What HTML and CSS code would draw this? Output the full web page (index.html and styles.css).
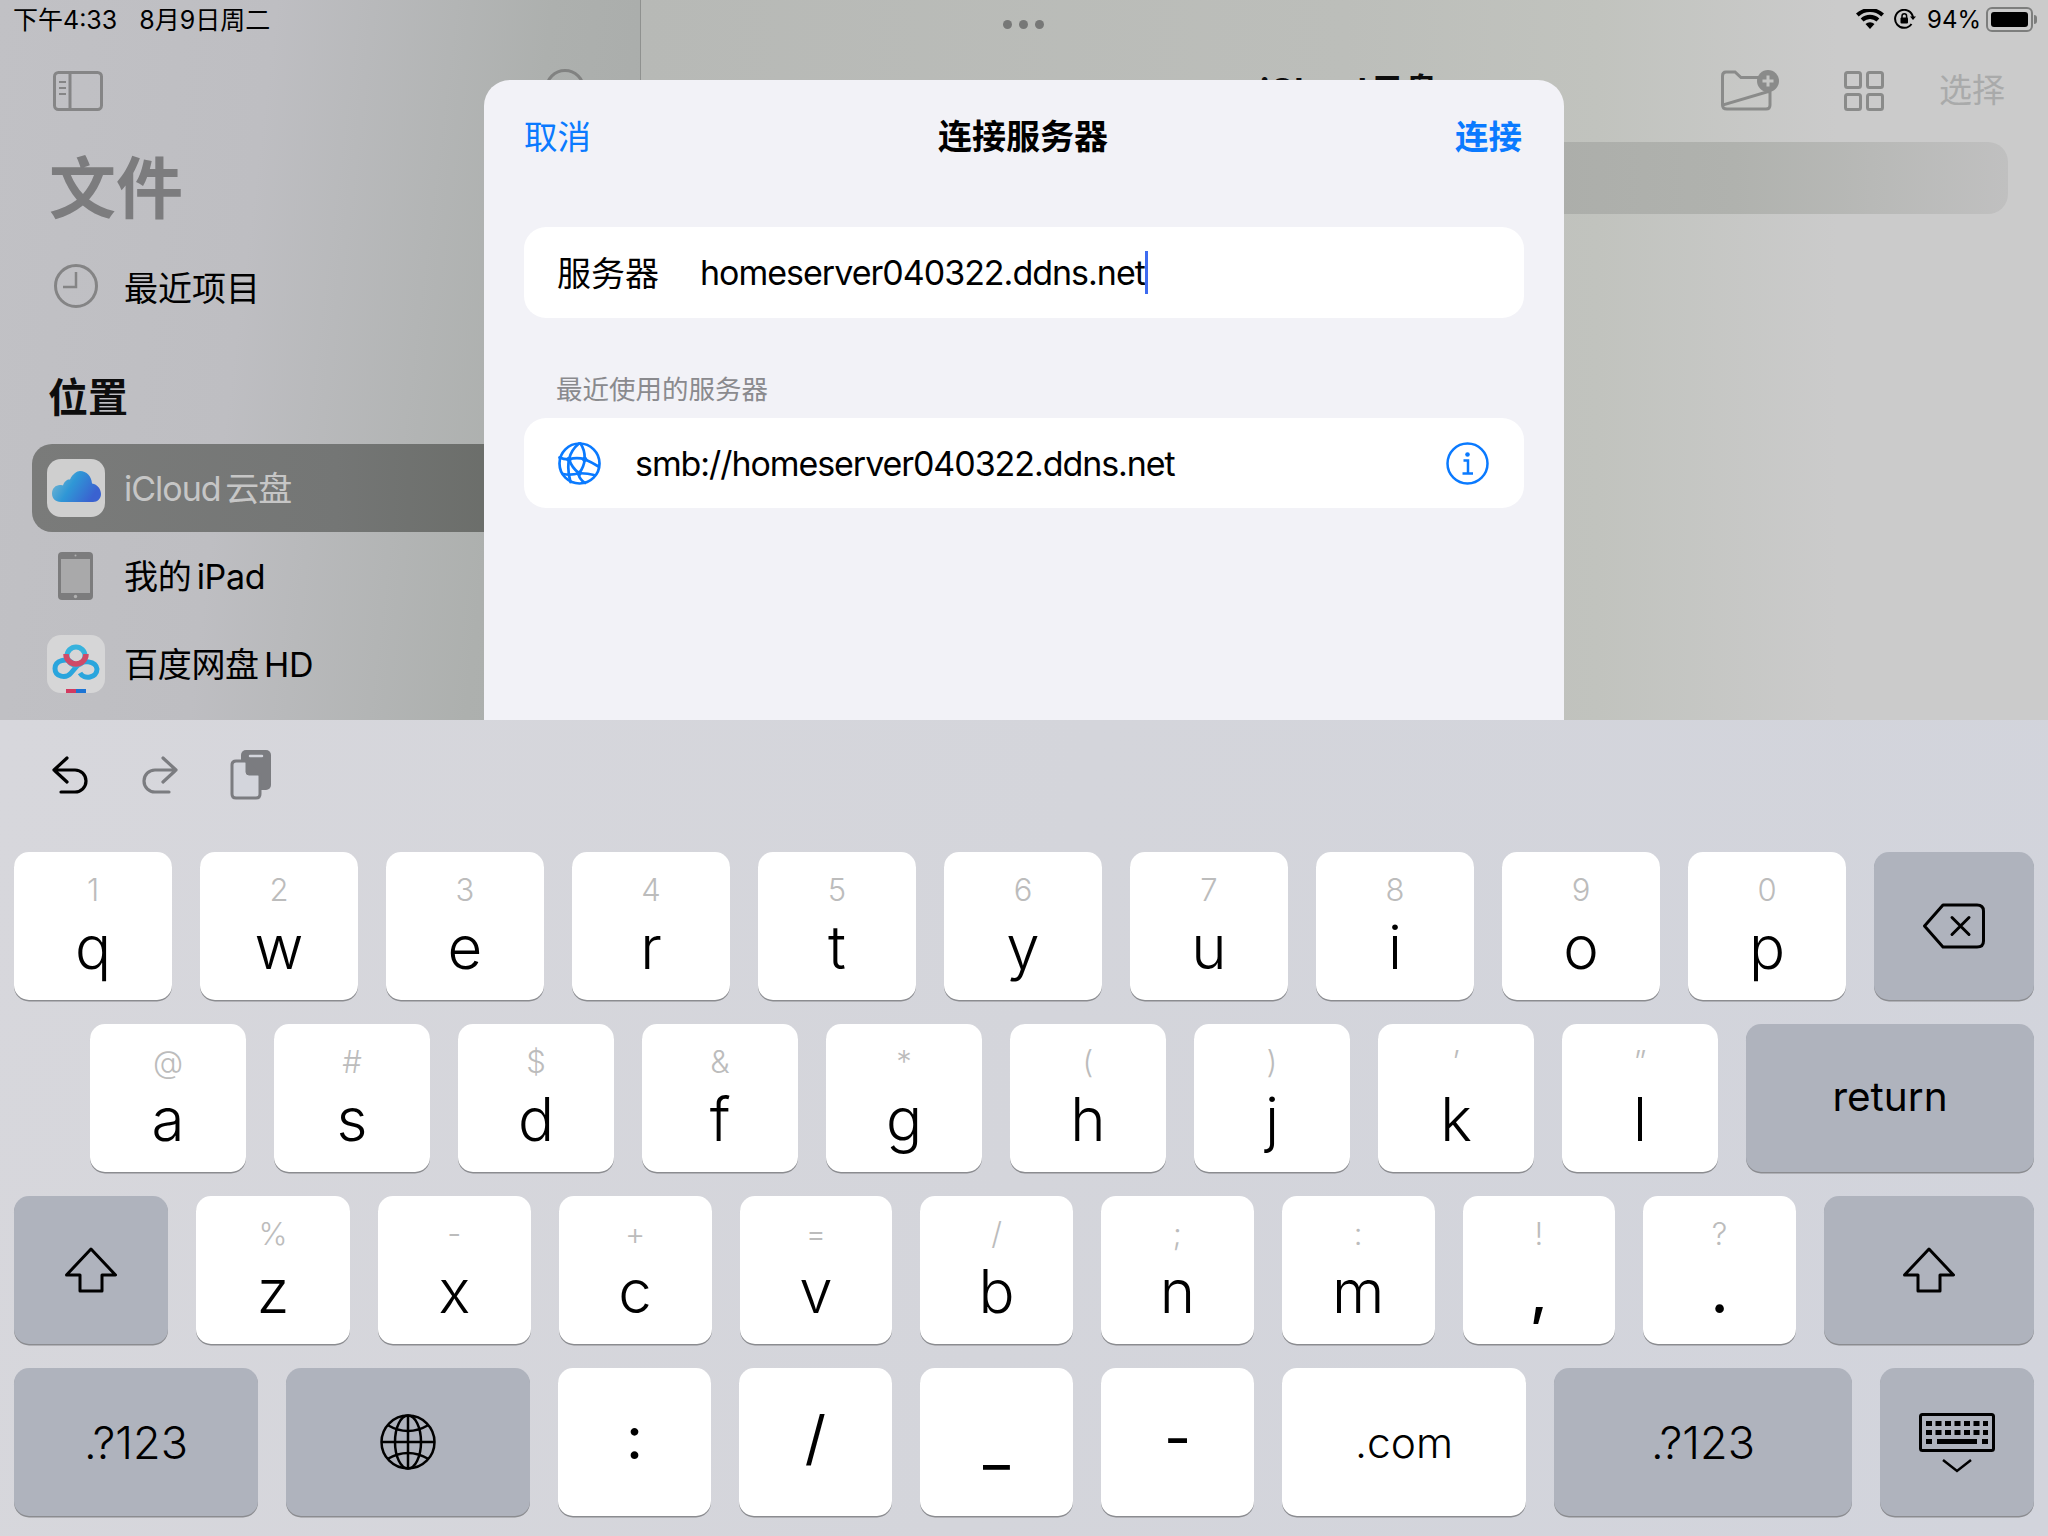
FILE: index.html
```html
<!DOCTYPE html>
<html lang="zh">
<head>
  <meta charset="UTF-8" />
  <title>连接服务器</title>
  <link rel="stylesheet" href="styles.css">
</head>
<body>

  <!-- 文件 app, dimmed behind the sheet -->
  <div class="screen">
    <div class="sidebar">
      <div class="sidebarTop">
        <svg class="sideToggle" width="50" height="40" viewBox="0 0 50 40" fill="none" stroke="#858586" stroke-width="3">
          <rect x="1.5" y="1.5" width="47" height="37" rx="4"/>
          <path d="M17 2v36"/>
          <path d="M6 11h7M6 17h7M6 23h7" stroke-width="2"/>
        </svg>
        <div class="moreCircle"></div>
      </div>
      <div class="appTitle">文件</div>
      <div class="recentRow">
        <svg class="rowIcon" width="58" height="44" viewBox="0 0 58 44" fill="none" stroke="#848485" stroke-width="3">
          <circle cx="29" cy="22" r="20.5"/>
          <path d="M29 8v15h-13" stroke-width="2.5"/>
        </svg>
        <span>最近项目</span>
      </div>
      <div class="sideHeading">位置</div>
      <div class="sideRow selected">
        <div class="appIcon cloudIcon">
          <svg class="cloudArt" width="50" height="34" viewBox="0 0 50 34">
            <defs>
              <linearGradient id="cloudFill" x1="0" y1="0" x2="1" y2="0.4">
                <stop offset="0" stop-color="#84bdd0"/>
                <stop offset="0.5" stop-color="#2f97d6"/>
                <stop offset="1" stop-color="#3a62d0"/>
              </linearGradient>
            </defs>
            <path fill="url(#cloudFill)" d="M9 31C3 31 0 27 0 22.500C0 17.500 3.500 14 8 14C9 13.800 10.500 14.200 11 14.500C12.500 9.500 16 8 18 8.500C20.500 3 25 0 28 0C34.500 0 39.500 5 40 12.500C45.500 13.500 49 18 49 23C49 27.500 45.500 31 41 31Z"/>
          </svg>
        </div>
        <span>iCloud 云盘</span>
      </div>
      <div class="sideRow">
        <svg class="padIcon" width="35" height="48" viewBox="0 0 35 48">
          <rect width="35" height="48" rx="4" fill="#7c7c7d"/>
          <rect x="3" y="7" width="29" height="34" fill="#a9a9aa"/>
          <circle cx="17.500" cy="3.500" r="1" fill="#b0b0b0"/>
          <circle cx="17.500" cy="44.500" r="1.700" fill="#b0b0b0"/>
        </svg>
        <span>我的 iPad</span>
      </div>
      <div class="sideRow">
        <div class="appIcon baiduIcon">
          <svg width="58" height="58" viewBox="0 0 58 58" fill="none">
            <path d="M25 27.500C20 23 8 25 8 33.500C8 42 19 44 24 38L30 31C35 24 49 26 50 34C50 43 37 45 33 38" stroke="#2aa5dd" stroke-width="5"/>
            <circle cx="29" cy="21" r="9" stroke="#37b2dd" stroke-width="5"/>
            <path d="M19 19A10 10 0 0 0 39 19" stroke="#cf4a68" stroke-width="5.500"/>
            <path d="M19 54h10v4h-10z" fill="#d23a60"/>
            <path d="M29 54h10v4h-10z" fill="#1c74d4"/>
          </svg>
        </div>
        <span>百度网盘 HD</span>
      </div>
    </div>

    <div class="main">
      <div class="mainTop">
        <div class="mainTitle">iCloud 云盘</div>
        <svg class="toolIcon" width="58" height="42" viewBox="0 0 58 42" fill="none" stroke="#8a8b8a" stroke-width="3">
          <path d="M1.500 36V7Q1.500 3 5 3H14L20 8.500H38M49 22V36Q49 40 45 40H6Q1.500 40 1.500 36Z"/>
          <circle cx="47" cy="12" r="11" fill="#8a8b8a" stroke="none"/>
          <path d="M47 6.500v11M41.500 12h11" stroke="#c4c5c3"/>
        </svg>
        <svg class="toolIcon gridIcon" width="40" height="40" viewBox="0 0 40 40" fill="none" stroke="#8a8b8a" stroke-width="3">
          <rect x="1.500" y="1.500" width="15" height="15" rx="2"/>
          <rect x="23.500" y="1.500" width="15" height="15" rx="2"/>
          <rect x="1.500" y="23.500" width="15" height="15" rx="2"/>
          <rect x="23.500" y="23.500" width="15" height="15" rx="2"/>
        </svg>
        <span class="selectBtn">选择</span>
      </div>
      <div class="searchBar"></div>
    </div>

    <!-- status bar -->
    <div class="statusBar">
      <span>下午4:33</span>
      <span class="statusDate">8月9日周二</span>
      <div class="statusRight">
        <svg width="28" height="20" viewBox="0 0 28 20">
          <path d="M14 20l-4.500-5a6.500 6.500 0 0 1 9 0zM7.500 12.500L4.700 9.500a13.500 13.500 0 0 1 18.600 0L20.500 12.500a9.500 9.500 0 0 0-13 0zM2.700 7.500L0 4.500a20.500 20.500 0 0 1 28 0L25.300 7.500a16.500 16.500 0 0 0-22.600 0z"/>
        </svg>
        <svg class="lockIcon" width="22" height="20" viewBox="0 0 22 20" fill="none" stroke="#000" stroke-width="2">
          <path d="M17.500 15A9 9 0 1 1 19 8.500"/>
          <path d="M16 7.500h6l-3 3.500z" fill="#000" stroke="none"/>
          <rect x="6.500" y="8.500" width="7.500" height="6" rx="1" fill="#000" stroke="none"/>
          <path d="M8 9V7a2.300 2.300 0 0 1 4.600 0v2" stroke-width="1.500"/>
        </svg>
        <span class="statusPct">94%</span>
        <div class="battery"><div class="batteryFill"></div></div>
        <div class="batteryNub"></div>
      </div>
    </div>

    <div class="multiDots"><i></i><i></i><i></i></div>

    <!-- 连接服务器 sheet -->
    <div class="sheet">
      <div class="sheetHead">
        <span class="navBtn">取消</span>
        <span class="sheetTitle">连接服务器</span>
        <span class="navBtn navBold">连接</span>
      </div>
      <div class="card inputCard">
        <span class="fieldLabel">服务器</span>
        <span class="fieldValue">homeserver040322.ddns.net</span>
        <span class="caret"></span>
      </div>
      <div class="recentLabel">最近使用的服务器</div>
      <div class="card serverCard">
        <svg class="globeIcon" width="43" height="43" viewBox="0 0 43 43" fill="none" stroke="#0a7aff" stroke-width="2.700" stroke-linecap="round">
          <circle cx="21.500" cy="21.500" r="20"/>
          <path d="M21 1.500Q13 8 11 17.300Q9 28 12.500 40"/>
          <path d="M22.500 1.500Q27 8 26.700 17.300Q26 25 21 31.300Q20 36 27 41"/>
          <path d="M1.500 15.500Q6 17.500 11 17.300Q19 15 26.700 17.300Q33 20 40.500 24.500"/>
          <path d="M5 32Q13 33.500 21 31.300Q29 31 36 33"/>
          <path d="M11 17.300Q14 26 21 31.300"/>
          <g fill="#0a7aff" stroke="none">
            <circle cx="11" cy="17.300" r="2.600"/>
            <circle cx="26.700" cy="17.300" r="2.600"/>
            <circle cx="21" cy="31.300" r="2.600"/>
          </g>
        </svg>
        <span class="serverUrl">smb://homeserver040322.ddns.net</span>
        <svg class="infoIcon" width="43" height="43" viewBox="0 0 43 43" fill="none" stroke="#0a7aff" stroke-width="2.500">
          <circle cx="21.500" cy="21.500" r="20"/>
          <path d="M17.500 18.500h4.500v13M16.500 31.500h10.500"/>
          <circle cx="21.500" cy="12.500" r="2.300" fill="#0a7aff" stroke="none"/>
        </svg>
      </div>
    </div>
  </div>

  <!-- keyboard -->
  <div class="keyboard">
    <div class="kbTools">
      <svg width="37" height="38" viewBox="0 0 37 38" fill="none" stroke="#000" stroke-width="3.200" stroke-linecap="round" stroke-linejoin="round">
        <path d="M15 2L2 14L15 26M2 14H23A11 11 0 0 1 23 36H9"/>
      </svg>
      <svg class="toolRedo" width="37" height="38" viewBox="0 0 37 38" fill="none" stroke="#7b7c80" stroke-width="3.200" stroke-linecap="round" stroke-linejoin="round">
        <path d="M22 2L35 14L22 26M35 14H14A11 11 0 0 0 14 36H28"/>
      </svg>
      <svg class="toolPaste" width="42" height="50" viewBox="0 0 42 50">
        <rect x="11" y="0" width="30" height="40" rx="5" fill="#7b7c80"/>
        <path d="M20 6h12" stroke="#d3d5dc" stroke-width="2.500" stroke-linecap="round"/>
        <path d="M6 11H16L30 25V44Q30 48 26 48H6Q2 48 2 44V15Q2 11 6 11Z" fill="#d3d5dc" stroke="#7b7c80" stroke-width="3"/>
        <path d="M16 11V22Q16 25 19 25H30Z" fill="#7b7c80" stroke="#7b7c80" stroke-width="1"/>
      </svg>
    </div>

    <div class="kbRow">
      <div class="key"><span class="sec">1</span><span class="pri">q</span></div>
      <div class="key"><span class="sec">2</span><span class="pri">w</span></div>
      <div class="key"><span class="sec">3</span><span class="pri">e</span></div>
      <div class="key"><span class="sec">4</span><span class="pri">r</span></div>
      <div class="key"><span class="sec">5</span><span class="pri">t</span></div>
      <div class="key"><span class="sec">6</span><span class="pri">y</span></div>
      <div class="key"><span class="sec">7</span><span class="pri">u</span></div>
      <div class="key"><span class="sec">8</span><span class="pri">i</span></div>
      <div class="key"><span class="sec">9</span><span class="pri">o</span></div>
      <div class="key"><span class="sec">0</span><span class="pri">p</span></div>
      <div class="key dark keyDelete">
        <svg width="62" height="46" viewBox="0 0 62 46" fill="none" stroke="#000" stroke-width="3" stroke-linejoin="round">
          <path d="M20 2H54Q60.500 2 60.500 8V38Q60.500 44 54 44H20L1.500 23Z"/>
          <path d="M29 14.500L46 31.500M46 14.500L29 31.500" stroke-linecap="round"/>
        </svg>
      </div>
    </div>

    <div class="kbRow rowHome">
      <div class="key"><span class="sec">@</span><span class="pri">a</span></div>
      <div class="key"><span class="sec">#</span><span class="pri">s</span></div>
      <div class="key"><span class="sec">$</span><span class="pri">d</span></div>
      <div class="key"><span class="sec">&amp;</span><span class="pri">f</span></div>
      <div class="key"><span class="sec">*</span><span class="pri">g</span></div>
      <div class="key"><span class="sec">(</span><span class="pri">h</span></div>
      <div class="key"><span class="sec">)</span><span class="pri">j</span></div>
      <div class="key"><span class="sec">’</span><span class="pri">k</span></div>
      <div class="key"><span class="sec">”</span><span class="pri">l</span></div>
      <div class="key dark keyReturn"><span class="word wordReturn">return</span></div>
    </div>

    <div class="kbRow">
      <div class="key dark keyShiftL">
        <svg width="52" height="46" viewBox="0 0 52 46" fill="none" stroke="#000" stroke-width="3" stroke-linejoin="round">
          <path d="M26 2L50.500 28H37V44H15V28H1.500Z"/>
        </svg>
      </div>
      <div class="key keyShiftL"><span class="sec">%</span><span class="pri">z</span></div>
      <div class="key"><span class="sec">-</span><span class="pri">x</span></div>
      <div class="key"><span class="sec">+</span><span class="pri">c</span></div>
      <div class="key"><span class="sec">=</span><span class="pri">v</span></div>
      <div class="key"><span class="sec">/</span><span class="pri">b</span></div>
      <div class="key"><span class="sec">;</span><span class="pri">n</span></div>
      <div class="key"><span class="sec">:</span><span class="pri">m</span></div>
      <div class="key"><span class="sec">!</span><span class="pri punct">,</span></div>
      <div class="key"><span class="sec">?</span><span class="pri punct">.</span></div>
      <div class="key dark keyShiftR">
        <svg width="52" height="46" viewBox="0 0 52 46" fill="none" stroke="#000" stroke-width="3" stroke-linejoin="round">
          <path d="M26 2L50.500 28H37V44H15V28H1.500Z"/>
        </svg>
      </div>
    </div>

    <div class="kbRow">
      <div class="key dark keyWide"><span class="word wordNum">.?123</span></div>
      <div class="key dark keyWide">
        <svg width="56" height="56" viewBox="0 0 56 56" fill="none" stroke="#000" stroke-width="2.500">
          <circle cx="28" cy="28" r="26.500"/>
          <ellipse cx="28" cy="28" rx="13" ry="26.500"/>
          <path d="M28 1.500v53M1.500 28h53"/>
          <path d="M7.500 11Q28 23 48.500 11M7.500 45Q28 33 48.500 45"/>
        </svg>
      </div>
      <div class="key"><span class="solo">:</span></div>
      <div class="key"><span class="solo">/</span></div>
      <div class="key"><span class="solo soloLow">_</span></div>
      <div class="key"><span class="solo">-</span></div>
      <div class="key keyWide"><span class="word">.com</span></div>
      <div class="key dark keyNum"><span class="word wordNum">.?123</span></div>
      <div class="key dark keyHide">
        <svg class="hideArt" width="76" height="62" viewBox="0 0 76 62" fill="none" stroke="#000" stroke-width="3">
          <rect x="1.500" y="1.500" width="73" height="36" rx="2"/>
          <path d="M7 10.500H69M7 19.500H69" stroke-width="5" stroke-dasharray="6 3.500"/>
          <path d="M7 28.500H13M18 28.500H58M63 28.500H69" stroke-width="5"/>
          <path d="M24 47L38 58L52 47" stroke-width="2.500"/>
        </svg>
      </div>
    </div>
  </div>

</body>
</html>
```

FILE: styles.css
```css
html, body {
  margin: 0;
  padding: 0;
  width: 2048px;
  height: 1536px;
  overflow: hidden;
  font-family: "Inter", "Noto Sans CJK SC", sans-serif;
  color: #000;
}

/* ---- dimmed app behind the sheet ---- */

.screen {
  position: relative;
  display: flex;
  height: 720px;
  overflow: hidden;
}

.sidebar {
  box-sizing: border-box;
  width: 641px;
  flex: none;
  padding-top: 71px;
  border-right: 1px solid #8f918f;
  background: linear-gradient(97deg, #c1c1c5 0%, #bebec2 38%, #adb0ae 76%, #a9acaa 100%);
}

.sidebarTop {
  display: flex;
  height: 40px;
  padding-left: 53px;
}

.moreCircle {
  box-sizing: border-box;
  width: 40px;
  height: 40px;
  margin: -2px 0 0 442px;
  border: 3px solid #818281;
  border-radius: 50%;
}

.appTitle {
  margin: 39px 0 0 49px;
  font-size: 67px;
  line-height: 78px;
  font-weight: 700;
  color: #7c7c7e;
}

.recentRow {
  display: flex;
  align-items: center;
  height: 44px;
  margin: 36px 0 0 47px;
  font-size: 34px;
}

.rowIcon {
  margin-right: 19px;
}

.sideHeading {
  margin: 65px 0 0 48px;
  font-size: 40px;
  line-height: 50px;
  font-weight: 700;
  color: #0d0d0d;
}

.sideRow {
  display: flex;
  align-items: center;
  box-sizing: border-box;
  height: 88px;
  margin-left: 32px;
  padding-left: 15px;
  font-size: 34px;
  word-spacing: -4px;
  letter-spacing: -0.3px;
}

.sidebar .sideHeading + .sideRow {
  margin-top: 21px;
}

.sideRow span {
  margin-left: 19px;
  margin-bottom: 3px;
}

.selected {
  border-radius: 20px 0 0 20px;
  background: linear-gradient(90deg, #7a7b7a 0%, #747675 50%, #636660 100%);
  color: #c6c6c6;
  letter-spacing: -1px;
}

.appIcon {
  display: flex;
  align-items: center;
  justify-content: center;
  width: 58px;
  height: 58px;
  overflow: hidden;
  border-radius: 14px;
  flex: none;
}

.cloudIcon {
  background: #cfcfcf;
}

.cloudArt {
  margin: 0 0 1px 1px;
}

.baiduIcon {
  background: #d6d6d7;
}

.padIcon {
  margin: 0 12px 0 11px;
  flex: none;
}

.main {
  flex: 1;
  padding-top: 69px;
  background: linear-gradient(90deg, #b7b9b6 0%, #bcbeba 50%, #c1c3be 68%, #cbcbcb 85%);
}

.mainTop {
  display: flex;
  align-items: flex-start;
  height: 42px;
  padding-left: 1080px;
}

.mainTitle {
  position: absolute;
  left: 1260px;
  top: 70px;
  font-size: 34px;
  font-weight: 700;
  line-height: 42px;
  white-space: nowrap;
  word-spacing: -5px;
  color: #0d0d0d;
}

.gridIcon {
  margin: 2px 0 0 65px;
}

.selectBtn {
  margin-left: 55px;
  font-size: 33px;
  line-height: 42px;
  color: #a9aaaa;
}

.searchBar {
  width: 1367px;
  height: 72px;
  margin-top: 31px;
  border-radius: 20px;
  background: linear-gradient(90deg, #aaaca8 60%, #b0b2ae 80%, #c0c0c0 100%);
}

/* ---- status bar ---- */

.statusBar {
  position: absolute;
  top: 0;
  left: 13px;
  right: 11px;
  display: flex;
  align-items: center;
  height: 36px;
  font-size: 25px;
}

.statusDate {
  margin-left: 22px;
}

.statusRight {
  display: flex;
  align-items: center;
  margin-top: 2px;
  margin-left: auto;
  font-size: 24px;
}

.lockIcon {
  margin-left: 10px;
}

.statusPct {
  margin-left: 11px;
}

.battery {
  box-sizing: border-box;
  width: 47px;
  height: 25px;
  margin-left: 5px;
  padding: 3px;
  border: 2px solid #7d7e7d;
  border-radius: 6px;
}

.batteryFill {
  height: 100%;
  border-radius: 3px;
  background: #000;
}

.batteryNub {
  width: 3px;
  height: 9px;
  margin-left: 1px;
  border-radius: 0 3px 3px 0;
  background: #7d7e7d;
}

.multiDots {
  position: absolute;
  top: 20px;
  left: 1003px;
  display: flex;
  gap: 7px;
}

.multiDots i {
  width: 9px;
  height: 9px;
  border-radius: 50%;
  background: #777877;
}

/* ---- sheet ---- */

.sheet {
  position: absolute;
  top: 80px;
  left: 484px;
  box-sizing: border-box;
  width: 1080px;
  height: 660px;
  padding: 0 40px;
  border-radius: 26px 26px 0 0;
  background: #f2f2f7;
}

.sheetHead {
  display: flex;
  align-items: center;
  justify-content: space-between;
  height: 108px;
  padding: 0 2px 0 0;
}

.navBtn {
  font-size: 33.500px;
  color: #0a7aff;
}

.navBold {
  font-weight: 700;
}

.sheetTitle {
  font-size: 34px;
  font-weight: 700;
}

.card {
  display: flex;
  align-items: center;
  height: 91px;
  padding: 0 33px;
  border-radius: 22px;
  background: #fff;
}

.inputCard {
  margin-top: 39px;
}

.fieldLabel {
  width: 143px;
  margin-bottom: 2px;
  font-size: 34px;
}

.fieldValue {
  margin-bottom: 1px;
  font-size: 34px;
  letter-spacing: -1px;
}

.caret {
  width: 3px;
  height: 43px;
  background: #3d6bf0;
}

.recentLabel {
  margin: 53px 0 0 32px;
  font-size: 26.500px;
  line-height: 36px;
  color: #8a8a8e;
}

.serverCard {
  margin-top: 11px;
  height: 90px;
}

.globeIcon {
  margin-left: 1px;
}

.serverUrl {
  margin-left: 34px;
  font-size: 34px;
  letter-spacing: -1.070px;
}

.infoIcon {
  margin-left: auto;
  margin-right: 2px;
}

/* ---- keyboard ---- */

.keyboard {
  box-sizing: border-box;
  height: 816px;
  padding: 0 14px;
  background: linear-gradient(100deg, #d7d7dc 0%, #d4d5db 50%, #d2d4dc 100%);
}

.kbTools {
  display: flex;
  align-items: center;
  height: 132px;
  padding-left: 38px;
  padding-bottom: 22px;
  box-sizing: border-box;
}

.toolRedo {
  margin-left: 52px;
}

.toolPaste {
  margin-left: 52px;
}

.kbRow {
  display: flex;
  gap: 28px;
  margin-bottom: 24px;
}

.rowHome {
  padding-left: 76px;
}

.key {
  display: flex;
  flex-direction: column;
  align-items: center;
  justify-content: center;
  flex: 1;
  min-width: 0;
  height: 148px;
  border-radius: 15px;
  background: #fff;
  box-shadow: 0 1.500px 0 #8b8c90;
}

.dark {
  background: #afb3bd;
}

.sec {
  height: 30px;
  margin-top: 4px;
  font-size: 31px;
  font-weight: 300;
  line-height: 30px;
  color: #bcbcbc;
}

.pri {
  height: 70px;
  margin-top: 7px;
  font-size: 60px;
  font-weight: 300;
  line-height: 70px;
}

.punct {
  font-weight: 500;
}

.solo {
  padding-bottom: 8px;
  font-size: 59px;
  font-weight: 400;
  line-height: 70px;
}

.soloLow {
  padding: 0;
  margin-top: 4px;
}

.word {
  font-size: 42.500px;
  font-weight: 300;
}

.wordReturn {
  margin-bottom: 3px;
  font-size: 40.500px;
  font-weight: 400;
}

.wordNum {
  font-size: 45px;
}

.keyDelete {
  flex: none;
  width: 160px;
}

.keyReturn {
  flex: none;
  width: 288px;
}

.keyShiftL {
  flex: none;
  width: 154px;
}

.keyShiftR {
  flex: none;
  width: 210px;
}

.keyWide {
  flex: none;
  width: 244px;
}

.keyNum {
  flex: none;
  width: 298px;
}

.keyHide {
  flex: none;
  width: 154px;
}

.hideArt {
  margin-top: 3px;
}
```
